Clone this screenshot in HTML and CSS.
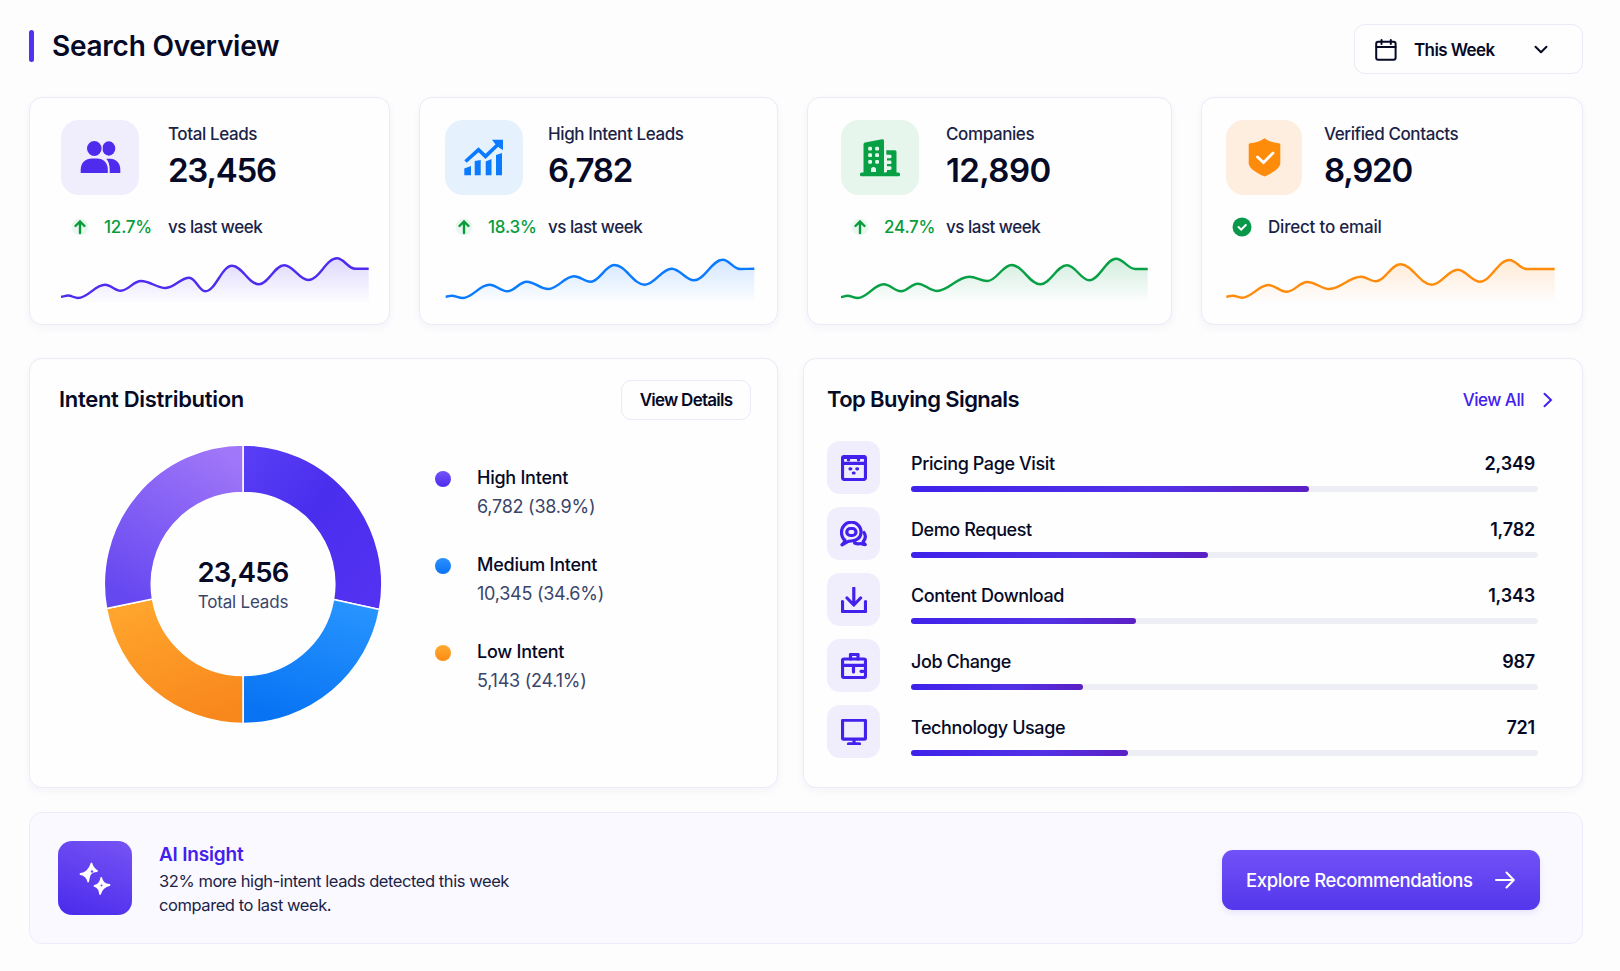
FILE: index.html
```
<!DOCTYPE html>
<html lang="en">
<head>
    <meta charset="UTF-8">
    <meta name="viewport" content="width=device-width, initial-scale=1.0">
    <title>Search Overview</title>
    <link rel="stylesheet" href="styles.css">
</head>
<body>
    <header class="page-header">
        <h1>Search Overview</h1>
        <button class="period" type="button">
            <svg class="period-icon" width="22" height="22" viewBox="0 0 22 22" fill="none" stroke="currentColor" stroke-width="2" stroke-linecap="round">
                <rect x="1.2" y="2.8" width="19.4" height="18" rx="2"/>
                <path d="M1.5 8h19M6.5 1v4M15.8 1v4"/>
            </svg>
            <span>This Week</span>
            <svg class="period-arrow" width="14" height="10" viewBox="0 0 14 10" fill="none" stroke="currentColor" stroke-width="2" stroke-linecap="round" stroke-linejoin="round">
                <path d="M1.5 1.8 7 7.3l5.5-5.5"/>
            </svg>
        </button>
    </header>

    <main>
        <section class="stats">
            <article class="card stat stat-leads">
                <div class="tile">
                    <svg width="41" height="33" viewBox="0 0 41 33" fill="currentColor">
                        <ellipse cx="28.8" cy="7.5" rx="6.500" ry="7.2"/>
                        <ellipse class="front-head" cx="14.3" cy="7.5" rx="7.9" ry="8.1"/>
                        <path d="M.7 32v-3.200C.7 21.500 5.500 17.500 12 17.500h5c6.500 0 10.800 4.500 10.800 11V32z"/>
                        <path d="M26.300 17.700H30c6 0 10.300 4.500 10.300 10.500V32h-10.600v-3.500c0-4.500-1-8-3.400-10.800z"/>
                    </svg>
                </div>
                <div class="figures">
                    <h2>Total Leads</h2>
                    <strong>23,456</strong>
                </div>
                <div class="delta">
                    <svg class="up" width="18" height="18" viewBox="0 0 18 18"><circle cx="9" cy="9" r="8.500"/><path d="M9 15V3.800M4.500 8 9 3.500 13.500 8"/></svg>
                    <span>12.7%</span>
                </div>
                <p>vs last week</p>
                <svg class="spark" height="60" data-points="0,46.700 7,45.500 17,48 44,34.700 59.700,40.700 80,31 104.700,38 128.300,27.700 144.300,41.300 171,15.700 197.700,34.300 223.300,15.300 247.300,30 276,8.300 294,18.700 307.700,18.700"></svg>
            </article>

            <article class="card stat stat-intent">
                <div class="tile">
                    <svg width="40" height="37" viewBox="0 0 40 37" fill="currentColor">
                        <path d="M.3 29.500 7 27v9.300H.3zM10.700 22l6-1v15.300h-6zM21.700 22.500l5.800-2.500v16.300h-5.800zM32 16l6-2v22.300h-6z"/>
                        <path d="M1.500 22.500 14.500 10.800l7 6.600L35 4.500" fill="none" stroke="currentColor" stroke-width="3.600"/>
                        <path d="M28 .8h11V11l-3.500-2L30.800 4.500z"/>
                    </svg>
                </div>
                <div class="figures">
                    <h2>High Intent Leads</h2>
                    <strong>6,782</strong>
                </div>
                <div class="delta">
                    <svg class="up" width="18" height="18" viewBox="0 0 18 18"><circle cx="9" cy="9" r="8.500"/><path d="M9 15V3.800M4.500 8 9 3.500 13.500 8"/></svg>
                    <span>18.3%</span>
                </div>
                <p>vs last week</p>
                <svg class="spark" height="60" data-points="0.700,46.700 6.700,45.700 17.700,48 44.300,34.700 62.300,41.300 81.700,31.700 103.300,39 129,26.300 145.700,31.700 169.300,15 199.700,34.700 226.700,18.700 249,30.300 277.700,9.700 295,19 309.300,18.700"></svg>
            </article>

            <article class="card stat stat-companies">
                <div class="tile">
                    <svg width="40" height="38" viewBox="0 0 40 38" fill="currentColor">
                        <path d="M3.500 34V5.500a2 2 0 0 1 1.500-2L22 .3a1.600 1.600 0 0 1 2 1.500V34zM26.300 11.300H35a1.500 1.500 0 0 1 1.500 1.500V34H26.300z"/>
                        <rect x="0" y="33.500" width="40" height="3.800" rx="1.500"/>
                        <g class="windows">
                            <rect x="8.200" y="7.700" width="3.800" height="3.800" rx="1.200"/><rect x="15.200" y="7.700" width="3.800" height="3.800" rx="1.200"/>
                            <rect x="8.200" y="14.300" width="3.800" height="3.800" rx="1.200"/><rect x="15.200" y="14.300" width="3.800" height="3.800" rx="1.200"/>
                            <rect x="8.200" y="20.900" width="3.800" height="3.800" rx="1.200"/><rect x="15.200" y="20.900" width="3.800" height="3.800" rx="1.200"/>
                            <path d="M11 33v-2.500a2.500 2.500 0 0 1 5 0V33zM24 15.500h3V33h-3z"/>
                            <rect x="26" y="15.700" width="5.500" height="3.600" rx="1.400"/><rect x="26" y="21.500" width="5.500" height="3.600" rx="1.400"/><rect x="26" y="27.300" width="5.500" height="3.600" rx="1.400"/>
                        </g>
                    </svg>
                </div>
                <div class="figures">
                    <h2>Companies</h2>
                    <strong>12,890</strong>
                </div>
                <div class="delta">
                    <svg class="up" width="18" height="18" viewBox="0 0 18 18"><circle cx="9" cy="9" r="8.500"/><path d="M9 15V3.800M4.500 8 9 3.500 13.500 8"/></svg>
                    <span>24.7%</span>
                </div>
                <p>vs last week</p>
                <svg class="spark" height="60" data-points="0,47 6.300,45.700 16.700,48 42.700,34.300 60,41.300 76.700,33.700 95.700,41 128.300,26.700 146.300,31 170.700,15 199.300,34.300 226,15.300 248.300,30.300 275,8.700 294.300,19 306.700,19"></svg>
            </article>

            <article class="card stat stat-verified">
                <div class="tile">
                    <svg width="33" height="39" viewBox="0 0 33 39">
                        <path d="M16.500.3c4 3 9 4.700 14.500 5 .9.100 1.300.6 1.300 1.400V25c0 4-4.500 8.500-15.800 13.500C5.200 33.500.7 29 .7 25V6.700c0-.8.400-1.300 1.300-1.400 5.500-.3 10.500-2 14.500-5z" fill="currentColor"/>
                        <path d="m9.500 19 6 5.500L25 15" fill="none" stroke="#fff" stroke-width="2.800" stroke-linecap="round"/>
                    </svg>
                </div>
                <div class="figures">
                    <h2>Verified Contacts</h2>
                    <strong>8,920</strong>
                </div>
                <div class="note">
                    <svg width="20" height="20" viewBox="0 0 20 20">
                        <circle cx="10" cy="10" r="9.500" fill="#07984a"/>
                        <path d="m6.500 10 2.700 2.700L13.800 8" fill="none" stroke="#fff" stroke-width="2" stroke-linecap="round"/>
                    </svg>
                    <span>Direct to email</span>
                </div>
                <svg class="spark" height="60" data-points="0.300,46.700 6.700,45.700 16,47.700 42.300,35 60.700,41.700 81.300,32 103.300,39 135,26.700 149.700,31.300 174.300,14.300 206,34.700 231.700,19.700 253.700,31.700 283.300,10 300.700,19 328.700,19"></svg>
            </article>
        </section>

        <section class="panels">
            <article class="card distribution">
                <div class="panel-head">
                    <h2>Intent Distribution</h2>
                    <button class="details" type="button">View Details</button>
                </div>
                <div class="chart-row">
                    <div class="donut">
                        <svg width="280" height="280" viewBox="-140 -140 280 280">
                            <defs>
                                <linearGradient id="gHigh" x1="0" y1="0" x2="1" y2="1">
                                    <stop offset="0" stop-color="#5a3ff6"/><stop offset="0.450" stop-color="#4a2eee"/><stop offset="1" stop-color="#5532f2"/>
                                </linearGradient>
                                <linearGradient id="gLilac" x1="0.800" y1="0" x2="0.300" y2="1">
                                    <stop offset="0" stop-color="#a077f8"/><stop offset="1" stop-color="#6648f1"/>
                                </linearGradient>
                                <linearGradient id="gBlue" x1="0.700" y1="0" x2="0.400" y2="1">
                                    <stop offset="0" stop-color="#2794ff"/><stop offset="1" stop-color="#0873f3"/>
                                </linearGradient>
                                <linearGradient id="gOrange" x1="0.200" y1="0" x2="0.600" y2="1">
                                    <stop offset="0" stop-color="#ffa62d"/><stop offset="1" stop-color="#f9881c"/>
                                </linearGradient>
                            </defs>
                            <g stroke="#fff" stroke-width="1.500">
                                <path fill="url(#gHigh)" d="M0-139A139 139 0 0 1 136.500 25.500L90.500 15.500A91.500 91.500 0 0 0 0-91.500z"/>
                                <path fill="url(#gBlue)" d="M136.500 25.500A139 139 0 0 1 0 139.500V91.500A91.500 91.500 0 0 0 90.500 15.500z"/>
                                <path fill="url(#gOrange)" d="M0 139.500A139 139 0 0 1-136.500 24.500L-90.500 15A91.500 91.500 0 0 0 0 91.500z"/>
                                <path fill="url(#gLilac)" d="M-136.500 24.500A139 139 0 0 1 0-139V-91.500A91.500 91.500 0 0 0-90.500 15z"/>
                            </g>
                        </svg>
                        <div class="donut-label">
                            <strong>23,456</strong>
                            <span>Total Leads</span>
                        </div>
                    </div>
                    <ul class="legend">
                        <li class="high"><b>High Intent</b><span>6,782 (38.9%)</span></li>
                        <li class="medium"><b>Medium Intent</b><span>10,345 (34.6%)</span></li>
                        <li class="low"><b>Low Intent</b><span>5,143 (24.1%)</span></li>
                    </ul>
                </div>
            </article>

            <article class="card signals">
                <div class="panel-head">
                    <h2>Top Buying Signals</h2>
                    <a class="view-all" href="#">View All
                        <svg width="10" height="16" viewBox="0 0 10 16" fill="none" stroke="currentColor" stroke-width="2" stroke-linecap="round"><path d="m1.500 1.800 6.500 6.200-6.500 6.200"/></svg>
                    </a>
                </div>
                <ul class="signal-list">
                    <li>
                        <span class="signal-icon">
                            <svg width="26" height="26" viewBox="0 0 26 26">
                                <rect x="1.500" y="1.500" width="23" height="23" rx="2"/>
                                <path d="M1.500 8.300h23M2 2.500h22"/>
                                <path d="M7.500 3v2M17.500 3v2M9 13.800h.8M15.800 13.800h.8M12.300 18h.800"/>
                            </svg>
                        </span>
                        <div class="signal-body">
                            <div class="signal-text"><span>Pricing Page Visit</span><b>2,349</b></div>
                            <div class="track"><div class="fill" style="width: 63.400%"></div></div>
                        </div>
                    </li>
                    <li>
                        <span class="signal-icon">
                            <svg width="27" height="26" viewBox="0 0 27 26">
                                <path d="M5 19.300C2.500 17.300 1.500 14.500 1.500 11a9.800 9.800 0 0 1 19.600 0c0 5.500-4.300 9-9.800 9-1.800 0-3.200.3-4.300 1l-5 2.800c1.700-1.300 2.700-2.700 3-4.500z"/>
                                <rect x="6.800" y="7.500" width="9.200" height="7" rx="3.500"/>
                                <path d="M24 11.500c1.800 2.800 1.500 6.500-.8 9 .3 1.200 1 2.200 2 3.200-1.800 0-3.200-.4-4.500-1.200-2.200.6-4.200.4-6-.5"/>
                            </svg>
                        </span>
                        <div class="signal-body">
                            <div class="signal-text"><span>Demo Request</span><b>1,782</b></div>
                            <div class="track"><div class="fill" style="width: 47.400%"></div></div>
                        </div>
                    </li>
                    <li>
                        <span class="signal-icon">
                            <svg width="26" height="26" viewBox="0 0 26 26">
                                <path d="M12.800 1v16M6 11l6.800 7 6.800-7M1.500 14.500v10h23v-10"/>
                            </svg>
                        </span>
                        <div class="signal-body">
                            <div class="signal-text"><span>Content Download</span><b>1,343</b></div>
                            <div class="track"><div class="fill" style="width: 35.900%"></div></div>
                        </div>
                    </li>
                    <li>
                        <span class="signal-icon">
                            <svg width="26" height="26" viewBox="0 0 26 26">
                                <rect x="1.500" y="6" width="23" height="18.500" rx="1.500"/>
                                <path d="M9.500 6V1.500h7.500V6M1.500 12.300h23M12.500 12.500v6.500M20 18.300h2"/>
                            </svg>
                        </span>
                        <div class="signal-body">
                            <div class="signal-text"><span>Job Change</span><b>987</b></div>
                            <div class="track"><div class="fill" style="width: 27.400%"></div></div>
                        </div>
                    </li>
                    <li>
                        <span class="signal-icon">
                            <svg width="26" height="26" viewBox="0 0 26 26">
                                <rect x="1.500" y="1.200" width="23" height="19" rx="1"/>
                                <path d="M13 20.500v4M7.500 24.800h11"/>
                            </svg>
                        </span>
                        <div class="signal-body">
                            <div class="signal-text"><span>Technology Usage</span><b>721</b></div>
                            <div class="track"><div class="fill" style="width: 34.600%"></div></div>
                        </div>
                    </li>
                </ul>
            </article>
        </section>

        <section class="insight">
            <div class="insight-icon">
                <svg width="32" height="33" viewBox="0 0 32 33" fill="#fff" stroke="#fff" stroke-width="1.800" stroke-linejoin="round">
                    <path d="M12.500 1.500c.7 3.500 2.500 5.500 5.500 7.500-4 .3-6.300 1.500-7.300 4-.7 1.800-1.200 4-1.500 6.500-.7-3.700-2.700-6.500-7.700-7.500 5-.5 9-4 11-10.500z"/>
                    <path d="M22.300 16c.5 3.700 3 6.300 8.200 7-5 .9-8 4-9.500 9-.2-4-1.800-7-5.500-8 4-.7 6-3.500 6.800-8z"/>
                    <circle cx="13" cy="9.500" r="1.200" fill="#6a4ff2" stroke="none"/>
                    <circle cx="22.500" cy="23.500" r="1" fill="#6a4ff2" stroke="none"/>
                </svg>
            </div>
            <div class="insight-text">
                <h2>AI Insight</h2>
                <p>32% more high-intent leads detected this week<br>compared to last week.</p>
            </div>
            <button class="explore" type="button">
                <span>Explore Recommendations</span>
                <svg width="20" height="18" viewBox="0 0 20 18" fill="none" stroke="currentColor" stroke-width="2" stroke-linecap="round" stroke-linejoin="round"><path d="M1 9h17.500M11.500 1.500 18.800 9l-7.300 7.500"/></svg>
            </button>
        </section>
    </main>

    <script src="script.js"></script>
</body>
</html>
```
FILE: styles.css
```
* {
    box-sizing: border-box;
}

body {
    margin: 0;
    padding: 24px 37px 0 29px;
    background-color: #fdfdfe;
    color: #060a26;
    font-family: Inter, 'Liberation Sans', sans-serif;
    font-size: 17px;
}

h1, h2, p, ul {
    margin: 0;
    padding: 0;
}

ul {
    list-style: none;
}

button {
    font-family: inherit;
    color: inherit;
    cursor: pointer;
}

svg {
    display: block;
    flex-shrink: 0;
}

.card {
    background-color: #fefeff;
    border: 1px solid #e9ebf7;
    border-radius: 13px;
    box-shadow: 0 3px 8px rgba(40, 50, 120, 0.045);
}

/* header */
.page-header {
    display: flex;
    justify-content: space-between;
    align-items: flex-start;
    height: 50px;
    margin-bottom: 23px;
}

h1 {
    display: flex;
    align-items: center;
    gap: 18px;
    margin-top: 4px;
    font-size: 28px;
    line-height: 36px;
    font-weight: 600;
    letter-spacing: -0.25px;
}

h1::before {
    content: '';
    width: 5px;
    height: 32px;
    border-radius: 3px;
    background-color: #5232f2;
}

.period {
    display: flex;
    align-items: center;
    width: 229px;
    height: 50px;
    padding: 1px 34px 0 20px;
    border: 1px solid #e9ebf7;
    border-radius: 11px;
    background-color: #fefeff;
    font-size: 17px;
    font-weight: 600;
    letter-spacing: -0.6px;
}

.period-icon {
    margin-right: 17px;
}

.period-arrow {
    margin-left: auto;
}

/* stat cards */
.stats {
    display: grid;
    grid-template-columns: 361px 359px 365px 382px;
    gap: 29px;
    margin-bottom: 33px;
}

.stat {
    display: grid;
    grid-template-columns: var(--lead) 1fr;
    grid-template-rows: 75px 43px 93px;
    height: 228px;
    padding: 22px 0 0 var(--inset);
}

.stat-leads {
    --inset: 31px;
    --lead: 107px;
    --accent: #4f2bee;
    --tint: #f0edfd;
}

.stat-intent {
    --inset: 25px;
    --lead: 103px;
    --accent: #0a7aff;
    --tint: #e6f1fe;
}

.stat-companies {
    --inset: 33px;
    --lead: 105px;
    --accent: #08a045;
    --tint: #e7f6ed;
}

.stat-verified {
    --inset: 24px;
    --lead: 98px;
    --accent: #ff8b0a;
    --tint: #feeee0;
}

.tile {
    display: flex;
    align-items: center;
    justify-content: center;
    width: 78px;
    height: 75px;
    border-radius: 18px;
    background-color: var(--tint);
    color: var(--accent);
}

.stat-verified .tile {
    width: 76px;
}

.windows {
    fill: var(--tint);
}

.front-head {
    stroke: var(--tint);
    stroke-width: 1.2;
}

.figures {
    padding-top: 3px;
}

.figures h2 {
    margin-bottom: 5px;
    color: #1b2347;
    font-size: 17px;
    line-height: 22px;
    font-weight: 500;
    letter-spacing: -0.4px;
}

.figures strong {
    display: block;
    font-size: 33px;
    line-height: 40px;
    font-weight: 600;
    letter-spacing: -1.2px;
}

.stat-companies strong {
    letter-spacing: -0.6px;
}

.delta, .note, .stat p {
    margin-top: 21px;
    line-height: 22px;
    height: 22px;
}

.delta {
    display: flex;
    align-items: center;
    gap: 15px;
    padding-left: 10px;
    color: #079c3b;
    font-weight: 500;
    letter-spacing: -0.2px;
}

.up circle {
    fill: #eaf7ef;
}

.up path {
    fill: none;
    stroke: #079c3b;
    stroke-width: 2.4;
    stroke-linecap: round;
}

.stat p, .note {
    color: #1b2347;
    font-weight: 500;
    letter-spacing: -0.5px;
}

.note {
    display: flex;
    align-items: center;
    gap: 16px;
    grid-column: 1 / 3;
    padding-left: 6px;
    letter-spacing: -0.2px;
}

.spark {
    grid-column: 1 / 3;
    width: 330px;
    margin-top: 12px;
    overflow: visible;
    color: var(--accent);
}

/* panels */
.panels {
    display: grid;
    grid-template-columns: 749px 780px;
    gap: 25px;
    margin-bottom: 24px;
}

.panels .card {
    height: 430px;
}

.distribution {
    padding: 21px 26px 0 29px;
}

.signals {
    padding: 21px 29px 0 23px;
}

.panel-head {
    display: flex;
    align-items: center;
    justify-content: space-between;
    height: 40px;
}

.panel-head h2 {
    margin-top: -2px;
    font-size: 22px;
    line-height: 30px;
    font-weight: 600;
    letter-spacing: -0.3px;
}

.signals .panel-head h2 {
    letter-spacing: -0.6px;
}

.details {
    width: 130px;
    height: 40px;
    padding: 0;
    border: 1px solid #e9ebf7;
    border-radius: 10px;
    background-color: #fefeff;
    font-size: 17px;
    font-weight: 600;
    letter-spacing: -0.75px;
}

.chart-row {
    display: flex;
    padding: 24px 0 0 44px;
}

.donut {
    display: grid;
    place-items: center;
    width: 280px;
    height: 280px;
}

.donut > * {
    grid-area: 1 / 1;
}

.donut-label {
    padding-top: 2px;
    text-align: center;
}

.donut-label strong {
    display: block;
    font-size: 27.5px;
    line-height: 34px;
    font-weight: 600;
    letter-spacing: -0.8px;
}

.donut-label span {
    display: block;
    color: #3b4569;
    font-size: 17px;
    line-height: 26px;
    letter-spacing: -0.2px;
}

.legend {
    padding: 19px 0 0 52px;
}

.legend li {
    position: relative;
    height: 87px;
    padding-left: 42px;
    font-size: 18px;
    line-height: 30px;
    letter-spacing: -0.25px;
}

.legend li::before {
    content: '';
    position: absolute;
    left: 0;
    top: 8px;
    width: 16px;
    height: 16px;
    border-radius: 50%;
    background: var(--dot);
}

.legend b {
    display: block;
    line-height: 29px;
    font-weight: 500;
}

.legend span {
    color: #3b4569;
}

.high {
    --dot: linear-gradient(#7554f8, #4d2bee);
}

.medium {
    --dot: linear-gradient(#2a90ff, #0a72f4);
}

.low {
    --dot: linear-gradient(#ffab30, #fb8a14);
}

.view-all {
    display: flex;
    align-items: center;
    gap: 19px;
    color: #4320ee;
    font-weight: 500;
    letter-spacing: -0.5px;
    text-decoration: none;
}

.signal-list {
    display: grid;
    gap: 13px;
    padding: 21px 15px 0 0;
}

.signal-list li {
    display: flex;
    gap: 31px;
    height: 53px;
}

.signal-icon {
    display: flex;
    align-items: center;
    justify-content: center;
    width: 53px;
    height: 53px;
    border-radius: 13px;
    background-color: #f0edfd;
}

.signal-icon svg {
    fill: none;
    stroke: #4420ec;
    stroke-width: 3.2;
    stroke-linecap: round;
    stroke-linejoin: round;
}

.signal-body {
    flex: 1;
    padding-top: 11px;
}

.signal-text {
    display: flex;
    justify-content: space-between;
    margin-bottom: 10px;
    padding-right: 3px;
    font-size: 18px;
    line-height: 24px;
    font-weight: 500;
    letter-spacing: -0.4px;
}

.signal-text b {
    font-weight: 600;
    letter-spacing: -0.2px;
}

.track {
    height: 6px;
    border-radius: 3px;
    background-color: #eeeff6;
}

.fill {
    height: 6px;
    border-radius: 3px;
    background: linear-gradient(90deg, #3f22ea, #5231e6 60%, #5b20c4);
}

/* insight banner */
.insight {
    display: flex;
    align-items: center;
    height: 132px;
    padding: 0 42px 0 28px;
    border: 1px solid #edecfb;
    border-radius: 13px;
    background-color: #faf9ff;
}

.insight-icon {
    display: flex;
    align-items: center;
    justify-content: center;
    width: 74px;
    height: 74px;
    border-radius: 14px;
    background: linear-gradient(20deg, #4a2aec, #7654f4);
}

.insight-text {
    margin: 2px auto 0 27px;
}

.insight-text h2 {
    color: #4320ee;
    font-size: 19px;
    line-height: 28px;
    font-weight: 600;
    letter-spacing: -0.2px;
}

.insight-text p {
    color: #1b2347;
    font-size: 16.5px;
    line-height: 24.5px;
    letter-spacing: -0.43px;
}

.explore {
    display: flex;
    align-items: center;
    justify-content: space-between;
    width: 318px;
    height: 60px;
    margin-top: 3px;
    padding: 1px 25px 0 24px;
    border: none;
    border-radius: 11px;
    background: linear-gradient(#7152f7, #5436ec);
    box-shadow: 0 3px 6px rgba(80, 50, 230, 0.1);
    color: #fff;
    font-size: 18.5px;
    font-weight: 500;
    letter-spacing: -0.4px;
}
```
FILE: script.js
```
// Draws each sparkline as a smooth curve through its data-points
document.querySelectorAll('.spark').forEach((svg, i) => {
    const pts = svg.dataset.points.split(' ').map(p => p.split(',').map(Number));
    let line = `M${pts[0][0]} ${pts[0][1]}`;

    for (let k = 1; k < pts.length; k++) {
        const [x0, y0] = pts[k - 1];
        const [x1, y1] = pts[k];
        const h = (x1 - x0) * 0.38;
        line += `C${x0 + h} ${y0} ${x1 - h} ${y1} ${x1} ${y1}`;
    }

    const area = `${line}V54H${pts[0][0]}Z`;
    svg.innerHTML = `
        <defs>
            <linearGradient id="spark${i}" gradientUnits="userSpaceOnUse" x1="0" y1="8" x2="0" y2="54">
                <stop offset="0" stop-color="currentColor" stop-opacity="0.18"/>
                <stop offset="1" stop-color="currentColor" stop-opacity="0"/>
            </linearGradient>
        </defs>
        <path d="${area}" fill="url(#spark${i})"/>
        <path d="${line}" fill="none" stroke="currentColor" stroke-width="2.4"/>`;
});
```
